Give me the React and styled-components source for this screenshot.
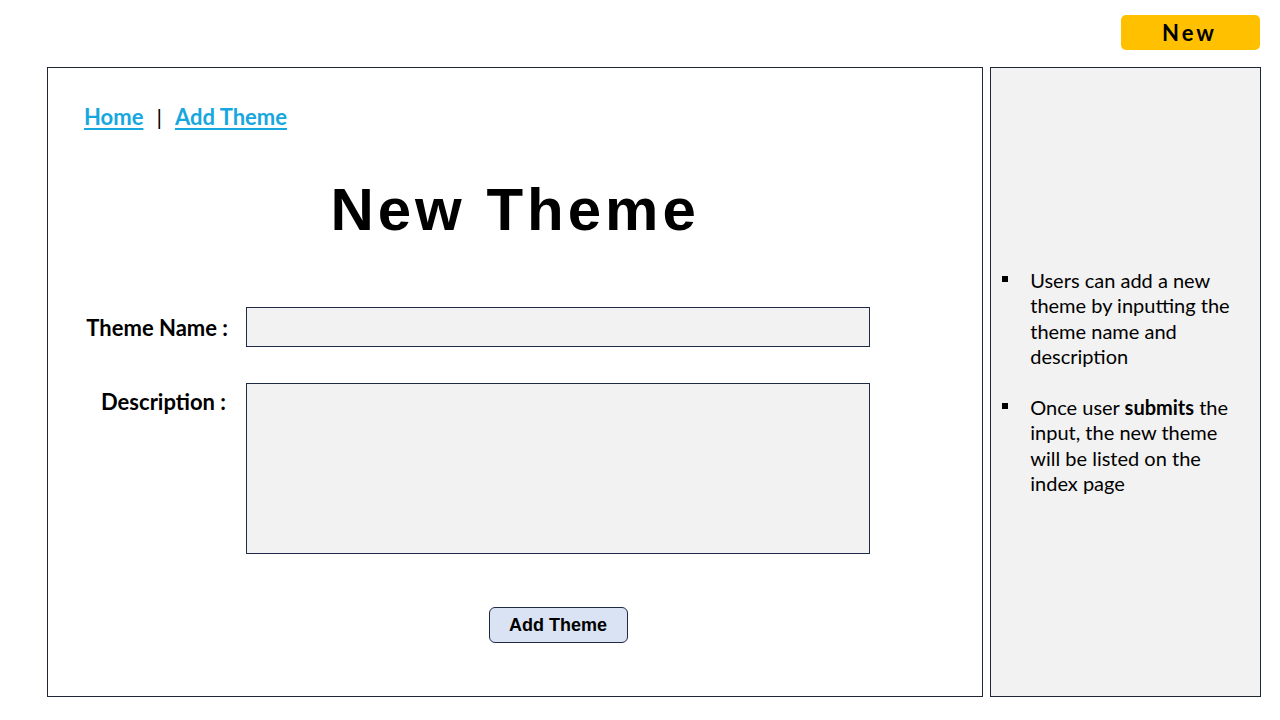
import React from "react";
import styled, { createGlobalStyle } from "styled-components";

const GlobalStyle = createGlobalStyle`
  html, body {
    margin: 0;
    padding: 0;
    background: #ffffff;
  }
  body {
    font-family: Lato, "Open Sans", sans-serif;
    color: #000;
  }
`;

const Container = styled.div`
  width: 1280px;
  height: 720px;
  box-sizing: border-box;
  padding: 0 19px 0 47px;
  display: flex;
  flex-direction: column;
  overflow: hidden;
`;
const Header = styled.div`
  height: 67px;
  display: flex;
  justify-content: flex-end;
  align-items: flex-start;
  padding-right: 1px;
  box-sizing: border-box;
`;
const Badge = styled.div`
  margin-top: 15px;
  width: 139px;
  height: 35px;
  background: #ffc000;
  border-radius: 5px;
  display: flex;
  align-items: center;
  justify-content: center;
  font-weight: 700;
  font-size: 22px;
  letter-spacing: 3px;
  padding-right: 2px;
  box-sizing: border-box;
`;
const Body = styled.div`
  display: flex;
  gap: 7px;
  height: 630px;
`;
const Main = styled.div`
  width: 937px;
  box-sizing: border-box;
  border: 1px solid #1f2636;
  padding: 34px 0 0 36px;
  display: flex;
  flex-direction: column;
`;
const Nav = styled.div`
  display: flex;
  align-items: center;
  gap: 13px;
  font-size: 22px;
  font-weight: 700;
  height: 28px;
`;
const NavLink = styled.a`
  color: #17a7df;
  text-decoration: underline;
  text-underline-offset: 3px;
  text-decoration-thickness: 2px;
`;
const Pipe = styled.span`
  color: #000;
  font-weight: 400;
`;
const Title = styled.h1`
  margin: 45px 0 0 0;
  padding-right: 36px;
  text-align: center;
  font-family: "Liberation Sans", Arial, sans-serif;
  font-weight: 700;
  font-size: 60px;
  letter-spacing: 4px;
  line-height: 70px;
`;
const Form = styled.div`
  margin-top: 62px;
  display: grid;
  grid-template-columns: 162px 624px;
  row-gap: 36px;
`;
const Label = styled.div`
  display: flex;
  justify-content: flex-end;
  align-items: ${(p) => (p.$top ? "flex-start" : "center")};
  padding-right: ${(p) => (p.$top ? "20px" : "18px")};
  padding-top: ${(p) => (p.$top ? "5px" : "0")};
  font-size: 22px;
  font-weight: 700;
`;
const Field = styled.div`
  height: ${(p) => (p.$tall ? "171px" : "40px")};
  box-sizing: border-box;
  background: #f2f2f2;
  border: 1px solid #1f2a44;
`;
const Actions = styled.div`
  grid-column: 2;
  display: flex;
  justify-content: center;
  margin-top: 17px;
`;
const Button = styled.button`
  width: 139px;
  height: 36px;
  background: #dae3f3;
  border: 1px solid #1f2a44;
  border-radius: 6px;
  font-family: "Liberation Sans", Arial, sans-serif;
  font-weight: 700;
  font-size: 18px;
  color: #000;
  padding: 0;
`;
const Side = styled.div`
  width: 271px;
  box-sizing: border-box;
  border: 1px solid #1f2636;
  background: #f2f2f2;
  display: flex;
  align-items: center;
  padding: 0 14px 0 11px;
`;
const List = styled.ul`
  list-style: none;
  margin: 0;
  padding: 0;
  display: flex;
  flex-direction: column;
  gap: 25px;
`;
const Item = styled.li`
  position: relative;
  padding-left: 28px;
  font-size: 20px;
  line-height: 25.5px;

  &::before {
    content: "";
    position: absolute;
    left: 0;
    top: 8px;
    width: 6px;
    height: 6px;
    background: #000;
  }
`;
const Strong = styled.b`
  font-weight: 700;
`;

const App = () => {
  return (
    <Container>
      <GlobalStyle />
      <Header>
        <Badge>New</Badge>
      </Header>
      <Body>
        <Main>
          <Nav>
            <NavLink href="#">Home</NavLink>
            <Pipe>|</Pipe>
            <NavLink href="#">Add Theme</NavLink>
          </Nav>
          <Title>New Theme</Title>
          <Form>
            <Label>Theme Name :</Label>
            <Field />
            <Label $top>Description :</Label>
            <Field $tall />
            <Actions>
              <Button>Add Theme</Button>
            </Actions>
          </Form>
        </Main>
        <Side>
          <List>
            <Item>
              Users can add a new theme by inputting the theme name and
              description
            </Item>
            <Item>
              Once user <Strong>submits</Strong> the input, the new theme will
              be listed on the index page
            </Item>
          </List>
        </Side>
      </Body>
    </Container>
  );
};

export default App;
